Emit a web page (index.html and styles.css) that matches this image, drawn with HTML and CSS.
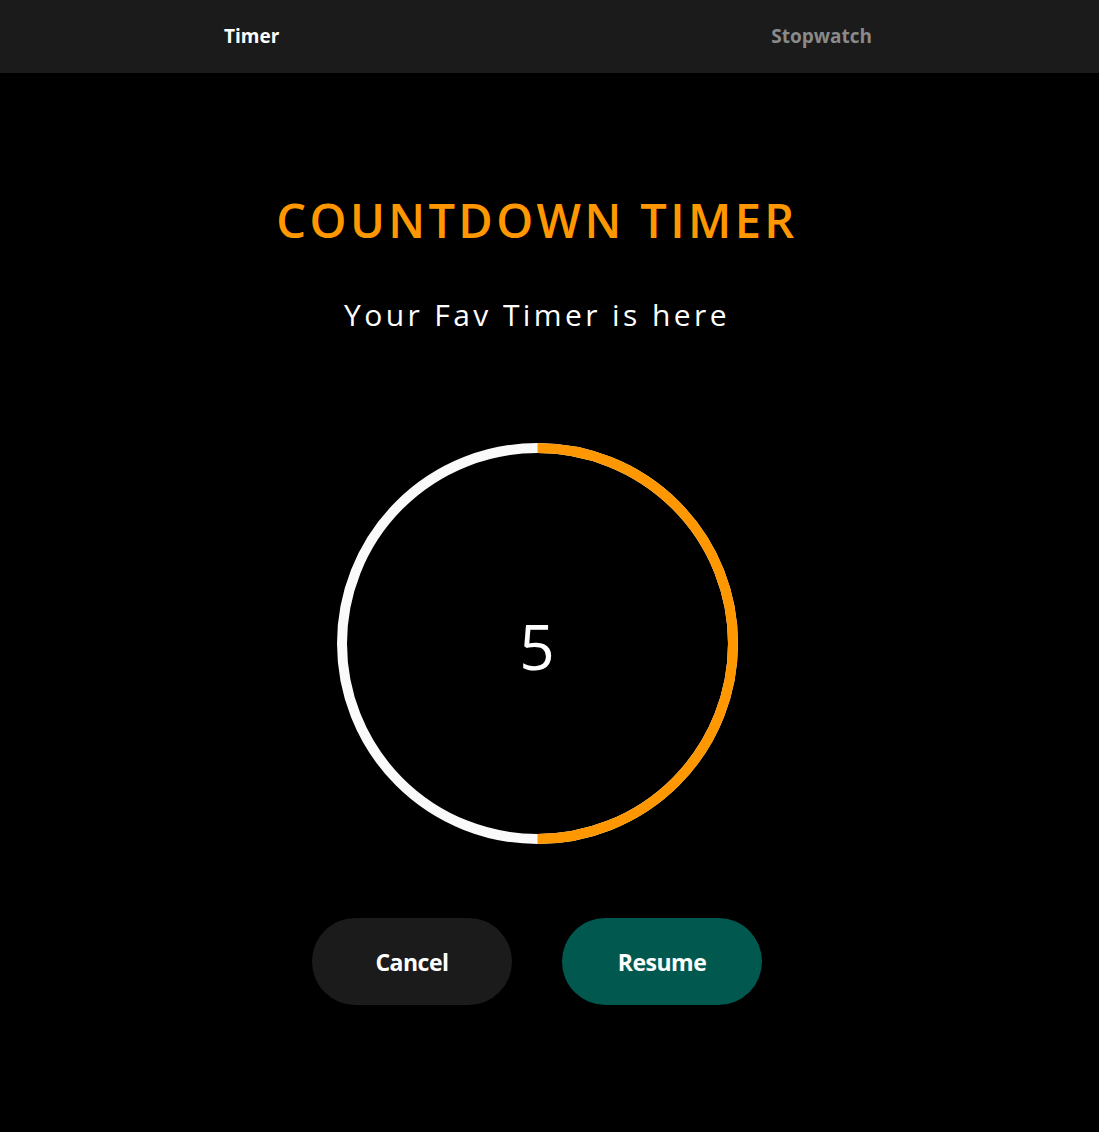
FILE: index.html
```html
<!DOCTYPE html>
<html lang="en">
<head>
<meta charset="utf-8">
<title>Countdown Timer</title>
<link rel="stylesheet" href="styles.css">
</head>
<body>
<nav class="tabs">
  <a class="tab tab-active">Timer</a>
  <a class="tab">Stopwatch</a>
</nav>
<main class="page">
  <h1 class="title">COUNTDOWN TIMER</h1>
  <p class="subtitle">Your Fav Timer is here</p>
  <div class="dial">
    <svg class="ring" width="401" height="401" viewBox="0 0 401 401">
      <circle cx="200.5" cy="200.5" r="195.5" fill="none" stroke="#fafafa" stroke-width="10"/>
      <path d="M200.5 5 A195.5 195.5 0 0 1 200.5 396" fill="none" stroke="#ff9800" stroke-width="10"/>
    </svg>
    <span class="count">5</span>
  </div>
  <div class="actions">
    <button class="btn btn-cancel">Cancel</button>
    <button class="btn btn-resume">Resume</button>
  </div>
</main>
</body>
</html>
```
FILE: styles.css
```css
html, body {
  margin: 0;
  background: #000;
  color: #fff;
  font-family: "Open Sans", "Noto Sans", sans-serif;
}
.tabs {
  display: flex;
  justify-content: space-between;
  align-items: center;
  height: 73px;
  background: #1b1b1b;
  padding: 0 227px 2px 224px;
  box-sizing: border-box;
}
.tab {
  font-size: 19px;
  font-weight: 700;
  color: #8a8a8a;
}
.tab-active {
  color: #fff;
}
.page {
  display: flex;
  flex-direction: column;
  align-items: center;
  padding-right: 25px;
}
.title {
  margin: 117px 0 0;
  font-size: 47px;
  line-height: 60px;
  font-weight: 600;
  letter-spacing: 3.4px;
  color: #ff9800;
}
.subtitle {
  margin: 47px 0 0;
  font-size: 30px;
  line-height: 36px;
  font-weight: 400;
  letter-spacing: 3.4px;
}
.dial {
  position: relative;
  margin-top: 110px;
  width: 401px;
  height: 401px;
}
.ring {
  display: block;
}
.count {
  position: absolute;
  inset: 0;
  display: flex;
  align-items: center;
  justify-content: center;
  font-size: 62px;
  font-weight: 400;
  padding-top: 4px;
}
.actions {
  display: flex;
  gap: 50px;
  margin-top: 74px;
}
.btn {
  width: 200px;
  height: 87px;
  border: none;
  border-radius: 44px;
  color: #fff;
  font-family: inherit;
  font-size: 23px;
  font-weight: 700;
  letter-spacing: -0.5px;
}
.btn-cancel {
  background: #1b1b1b;
}
.btn-resume {
  background: #01584e;
}
```
